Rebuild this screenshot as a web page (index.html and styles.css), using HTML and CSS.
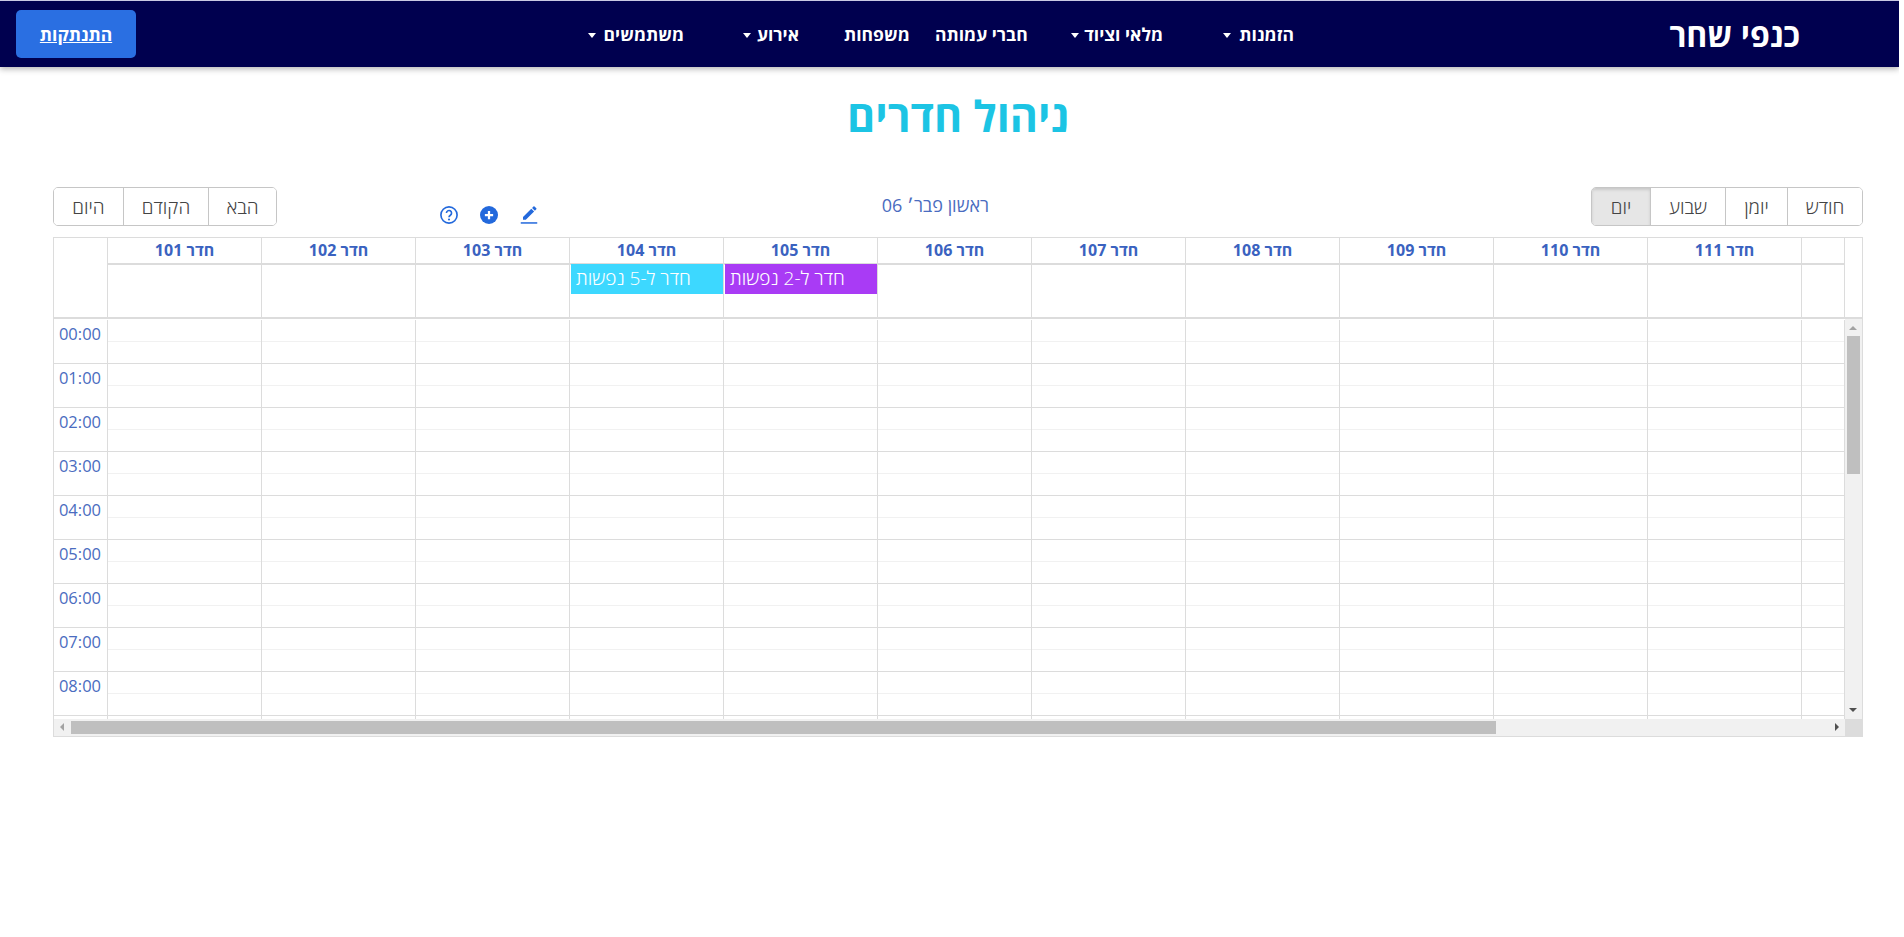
FILE: index.html
```html
<!DOCTYPE html>
<html lang="he" dir="rtl">
<head>
<meta charset="utf-8">
<title>ניהול חדרים</title>
<link rel="stylesheet" href="styles.css">
</head>
<body>
<nav class="navbar">
  <a class="logout" href="#">התנתקות</a>
  <ul class="menu">
    <li class="item w-users"><i class="caret"></i><span>משתמשים</span></li>
    <li class="item w-event"><i class="caret"></i><span>אירוע</span></li>
    <li class="item w-families"><span>משפחות</span></li>
    <li class="item w-members"><span>חברי עמותה</span></li>
    <li class="item w-stock"><i class="caret"></i><span>מלאי וציוד</span></li>
    <li class="item w-orders"><i class="caret"></i><span>הזמנות</span></li>
  </ul>
  <div class="brand">כנפי שחר</div>
</nav>
<main class="page">
  <h1 class="title">ניהול חדרים</h1>
  <div class="toolbar">
    <div class="btn-group views">
      <button class="btn">חודש</button>
      <button class="btn">יומן</button>
      <button class="btn">שבוע</button>
      <button class="btn active">יום</button>
    </div>
    <div class="date">ראשון פבר׳ 06</div>
    <div class="tools">
      <svg class="tool" viewBox="0 0 24 24"><path fill="#2369dc" d="M20.7 7.04a1 1 0 0 0 0-1.41l-2.34-2.34a1 1 0 0 0-1.41 0l-1.84 1.83 3.75 3.75 1.84-1.83zM3 17.25V21h3.75L17.81 9.94l-3.75-3.75L3 17.25z" transform="translate(1 -2.6) scale(1)"/><rect x="1" y="21.6" width="22" height="2" fill="#2369dc"/></svg>
      <svg class="tool" viewBox="0 0 24 24"><circle cx="12" cy="12" r="12" fill="#2369dc"/><path d="M12 6.5v11M6.5 12h11" stroke="#fff" stroke-width="3"/></svg>
      <svg class="tool" viewBox="0 0 24 24"><circle cx="12" cy="12" r="10.8" fill="none" stroke="#2369dc" stroke-width="2.2"/><path d="M8.6 9.4a3.4 3.4 0 1 1 5.2 2.9c-1.2.8-1.8 1.3-1.8 2.6" fill="none" stroke="#2369dc" stroke-width="2.2"/><circle cx="12" cy="17.9" r="1.4" fill="#2369dc"/></svg>
    </div>
    <div class="btn-group nav-btns">
      <button class="btn">הבא</button>
      <button class="btn">הקודם</button>
      <button class="btn">היום</button>
    </div>
  </div>
  <section class="calendar">
    <div class="head" id="head"></div>
    <div class="allday" id="allday"></div>
    <div class="body-wrap">
      <div class="hours" id="hours"></div>
      <div class="vscroll">
        <span class="arrow up"></span>
        <span class="vthumb"></span>
        <span class="arrow down"></span>
      </div>
    </div>
    <div class="hscroll">
      <div class="htrack">
        <span class="arrow left"></span>
        <span class="hthumb"></span>
        <span class="arrow right"></span>
      </div>
      <span class="corner"></span>
    </div>
  </section>
</main>
<script src="app.js"></script>
</body>
</html>
```
FILE: styles.css
```css
* { box-sizing: border-box; }
html, body { padding: 0; height: 100%; }
html { margin: 0; overflow: hidden; }
body {
  margin: 0 5px 0 0;
  background: #fff;
  font-family: "Open Sans", "Noto Sans", "Liberation Sans", sans-serif;
}
.navbar {
  direction: ltr;
  height: 67px;
  padding-left: 16px;
  background: #00004f;
  border-top: 1px solid #c9c9e4;
  box-shadow: 0 2px 6px rgba(0,0,0,.3);
  display: flex;
  align-items: center;
  color: #fff;
}
.logout {
  flex: none;
  width: 120px;
  height: 48px;
  background: #2a6fe2;
  border-radius: 5px;
  color: #fff;
  font-size: 17.5px;
  font-weight: 700;
  text-decoration: underline;
  display: flex;
  align-items: center;
  justify-content: center;
  direction: rtl;
}
.menu {
  list-style: none;
  margin: 0 0 0 452px;
  padding: 0;
  display: flex;
  flex: none;
}
.item {
  display: flex;
  align-items: center;
  justify-content: space-between;
  font-size: 17.5px;
  font-weight: 700;
  white-space: nowrap;
  direction: ltr;
}
.item span { direction: rtl; margin-left: auto; }
.caret {
  width: 0; height: 0;
  border-left: 4.5px solid transparent;
  border-right: 4.5px solid transparent;
  border-top: 5px solid #fff;
  margin-top: 2px;
}
.w-users { width: 96px; margin-right: 59px; }
.w-event { width: 56px; margin-right: 45px; }
.w-families { width: 63px; margin-right: 28px; }
.w-members { width: 91px; margin-right: 45px; }
.w-stock { width: 92px; margin-right: 60px; }
.w-orders { width: 71px; }
.brand {
  direction: rtl;
  flex: none;
  font-size: 32px;
  font-weight: 700;
  width: 130px;
  margin-left: 376px;
  white-space: nowrap;
  text-align: right;
}
.page { padding: 0 36px 0 53px; }
.title {
  margin: 0;
  padding-top: 26px;
  height: 120px;
  text-align: center;
  color: #1cc4e4;
  font-size: 43px;
  font-weight: 700;
  line-height: 46px;
}
.toolbar {
  display: flex;
  align-items: flex-start;
  height: 50px;
  width: 1810px;
}
.btn-group {
  display: flex;
  height: 39px;
  border: 1px solid #c6c6c6;
  border-radius: 5px;
  overflow: hidden;
  flex: none;
}
.btn {
  font: 300 19px "Open Sans", "Noto Sans", sans-serif;
  color: #444;
  background: #fff;
  border: 0;
  border-left: 1px solid #c6c6c6;
  padding: 0;
  height: 100%;
}
.btn:last-child { border-left: 0; }
.views .btn:nth-child(1) { width: 75px; }
.views .btn:nth-child(2) { width: 62px; }
.views .btn:nth-child(3) { width: 75px; }
.views .btn:nth-child(4) { width: 58px; }
.btn.active { background: #e6e6e6; box-shadow: inset 0 2px 3px rgba(0,0,0,.13); }
.nav-btns .btn:nth-child(1) { width: 68px; }
.nav-btns .btn:nth-child(2) { width: 85px; }
.nav-btns .btn:nth-child(3) { width: 69px; }
.date {
  margin-right: 602px;
  width: 110px;
  color: #4a6cc0;
  font-size: 18px;
  font-weight: 400;
  line-height: 37px;
  white-space: nowrap;
  flex: none;
}
.tools {
  display: flex;
  gap: 22px;
  margin-right: 341px;
  margin-top: 19px;
  flex: none;
}
.tool { width: 18px; height: 18px; display: block; }
.nav-btns { margin-right: auto; }
.calendar {
  direction: ltr;
  width: 1810px;
  height: 500px;
  border: 1px solid #dcdcdc;
  display: flex;
  flex-direction: column;
}
.head, .allday {
  display: grid;
  grid-template-columns: 54px repeat(11, 154px) 43px 17px;
  width: 1808px;
}
.head { height: 26px; }
.head .c {
  border-right: 1px solid #dcdcdc;
  border-bottom: 2px solid #dcdcdc;
  text-align: center;
  color: #3a62c0;
  font-size: 16px;
  font-weight: 700;
  line-height: 25px;
  direction: rtl;
}
.head .c:first-child { border-bottom: 0; }
.allday {
  height: 55px;
  border-bottom: 2px solid #dcdcdc;
}
.head .c:last-child, .allday .c:last-child { border-right: 0; border-bottom: 0; }
.allday .c { border-right: 1px solid #dcdcdc; }
.event {
  height: 30px;
  margin-left: 1px;
  color: #fff;
  font-size: 19px;
  font-weight: 300;
  line-height: 29px;
  padding-left: 5px;
  direction: rtl;
  text-align: left;
  white-space: nowrap;
}
.event.cyan { background: #3dd8ff; }
.event.purple { background: #a93bf5; }
.body-wrap {
  display: flex;
  height: 400px;
  flex: none;
}
.hours {
  width: 1791px;
  height: 400px;
  padding-top: 1px;
  overflow: hidden;
  flex: none;
}
.row {
  display: grid;
  grid-template-columns: 54px repeat(11, 154px) 43px;
  height: 44px;
  border-bottom: 1px solid #dcdcdc;
}
.row .c {
  border-right: 1px solid #dcdcdc;
  background: linear-gradient(#fff 21px, #f1f1f1 21px, #f1f1f1 22px, #fff 22px);
}
.row .c.time {
  background: none;
  color: #4a6cc0;
  font-size: 16.5px;
  font-weight: 400;
  text-align: right;
  padding-right: 6px;
  line-height: 27px;
}
.vscroll {
  width: 17px;
  background: #f1f1f1;
  position: relative;
}
.vthumb {
  position: absolute;
  top: 17px;
  left: 2px;
  width: 13px;
  height: 138px;
  background: #bfbfbf;
}
.arrow { position: absolute; width: 0; height: 0; }
.arrow.up {
  top: 7px; left: 4px;
  border-left: 4px solid transparent;
  border-right: 4px solid transparent;
  border-bottom: 4px solid #a3a3a3;
}
.arrow.down {
  bottom: 7px; left: 4px;
  border-left: 4px solid transparent;
  border-right: 4px solid transparent;
  border-top: 4px solid #505050;
}
.hscroll {
  display: flex;
  height: 17px;
  flex: none;
}
.htrack {
  width: 1791px;
  background: #f1f1f1;
  position: relative;
}
.corner { width: 17px; background: #dcdcdc; }
.hthumb {
  position: absolute;
  top: 2px;
  left: 17px;
  width: 1425px;
  height: 13px;
  background: #bfbfbf;
}
.arrow.left {
  top: 4px; left: 6px;
  border-top: 4px solid transparent;
  border-bottom: 4px solid transparent;
  border-right: 4px solid #a3a3a3;
}
.arrow.right {
  top: 4px; right: 6px;
  border-top: 4px solid transparent;
  border-bottom: 4px solid transparent;
  border-left: 4px solid #505050;
}
```
FILE: app.js
```js
const rooms = [101,102,103,104,105,106,107,108,109,110,111];
const cell = (cls, txt) => { const d = document.createElement('div'); d.className = cls; if (txt) d.textContent = txt; return d; };
const head = document.getElementById('head');
head.appendChild(cell('c'));
rooms.forEach(r => head.appendChild(cell('c', 'חדר ' + r)));
head.appendChild(cell('c'));
head.appendChild(cell('c'));
const allday = document.getElementById('allday');
allday.appendChild(cell('c'));
rooms.forEach(r => {
  const c = cell('c');
  if (r === 104) c.appendChild(cell('event cyan', 'חדר ל-5 נפשות'));
  if (r === 105) c.appendChild(cell('event purple', 'חדר ל-2 נפשות'));
  allday.appendChild(c);
});
allday.appendChild(cell('c'));
allday.appendChild(cell('c'));
const hours = document.getElementById('hours');
for (let h = 0; h < 10; h++) {
  const row = cell('row');
  row.appendChild(cell('c time', h < 9 ? String(h).padStart(2, '0') + ':00' : ''));
  rooms.forEach(() => row.appendChild(cell('c')));
  row.appendChild(cell('c'));
  hours.appendChild(row);
}
```
